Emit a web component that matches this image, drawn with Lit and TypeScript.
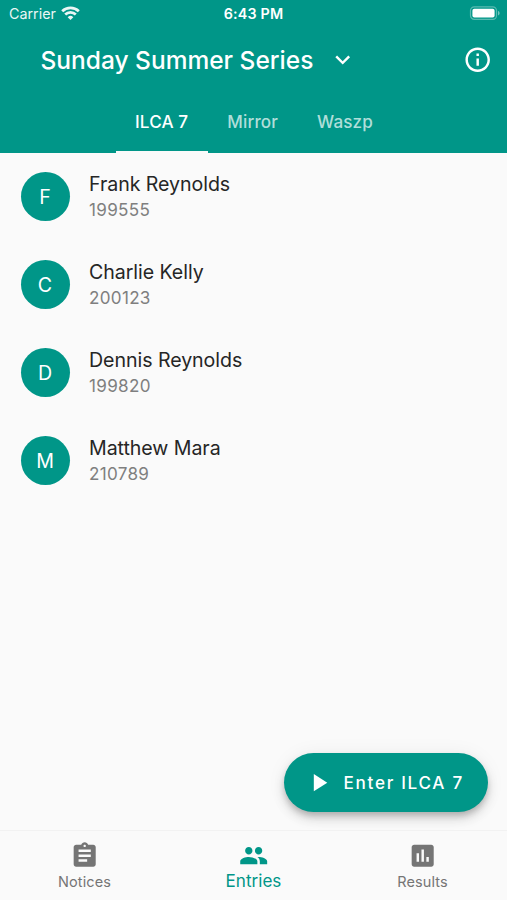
import { LitElement, html, css, svg } from "lit";
import { customElement, property, state } from "lit/decorators.js";
import { classMap } from "lit/directives/class-map.js";

const ICONS: Record<string, string> = {
  notices:
    "M19 3h-4.18C14.4 1.84 13.3 1 12 1c-1.3 0-2.4.84-2.82 2H5c-1.1 0-2 .9-2 2v14c0 1.1.9 2 2 2h14c1.1 0 2-.9 2-2V5c0-1.1-.9-2-2-2zm-7 0c.55 0 1 .45 1 1s-.45 1-1 1-1-.45-1-1 .45-1 1-1zm2 14H7v-2h7v2zm3-4H7v-2h10v2zm0-4H7V7h10v2z",
  entries:
    "M16 11c1.66 0 2.99-1.34 2.99-3S17.66 5 16 5c-1.66 0-3 1.34-3 3s1.34 3 3 3zm-8 0c1.66 0 2.99-1.34 2.99-3S9.66 5 8 5C6.34 5 5 6.34 5 8s1.34 3 3 3zm0 2c-2.33 0-7 1.17-7 3.5V19h14v-2.5c0-2.33-4.67-3.5-7-3.5zm8 0c-.29 0-.62.02-.97.05 1.16.84 1.97 1.97 1.97 3.45V19h6v-2.5c0-2.33-4.67-3.5-7-3.5z",
  results:
    "M19 3H5c-1.1 0-2 .9-2 2v14c0 1.1.9 2 2 2h14c1.1 0 2-.9 2-2V5c0-1.1-.9-2-2-2zM9 17H7v-7h2v7zm4 0h-2V7h2v10zm4 0h-2v-4h2v4z",
  info:
    "M11 7h2v2h-2zm0 4h2v6h-2zm1-9C6.480 2 2 6.480 2 12s4.480 10 10 10 10-4.480 10-10S17.520 2 12 2zm0 18c-4.410 0-8-3.590-8-8s3.590-8 8-8 8 3.590 8 8-3.590 8-8 8z",
  chevron: "M7.41 8.59 12 13.17l4.59-4.58L18 10l-6 6-6-6z",
  play: "M8 5v14l11-7z",
};

@customElement("md-icon")
class MdIcon extends LitElement {
  @property() name = "";
  static styles = css`
    :host { display: block; width: 29.4px; height: 29.4px; flex: none; }
    svg { display: block; width: 100%; height: 100%; fill: currentColor; }
  `;
  render() {
    return html`<svg viewBox="0 0 24 24">${svg`<path d=${ICONS[this.name]}></path>`}</svg>`;
  }
}

@customElement("entry-tile")
class EntryTile extends LitElement {
  @property() name = "";
  @property() sail = "";
  static styles = css`
    :host { display: flex; align-items: center; height: 88px; padding: 0 20.5px; box-sizing: border-box; }
    .avatar {
      width: 49px; height: 49px; border-radius: 50%; background: #009688; color: #fff;
      display: flex; align-items: center; justify-content: center; font-size: 19.6px;
    }
    .text { margin-left: 19.5px; }
    .name { font-size: 19.6px; line-height: 25px; color: #262626; letter-spacing: -0.06px; }
    .sail { font-size: 17.1px; line-height: 25px; color: #7f7f7f; letter-spacing: 0.3px; }
  `;
  render() {
    return html`
      <div class="avatar">${this.name[0]}</div>
      <div class="text">
        <div class="name">${this.name}</div>
        <div class="sail">${this.sail}</div>
      </div>
    `;
  }
}

@customElement("app-root")
class AppRoot extends LitElement {
  @state() private tab = "ILCA 7";
  @state() private section = "entries";

  private tabs = ["ILCA 7", "Mirror", "Waszp"];
  private entries = [
    { name: "Frank Reynolds", sail: "199555" },
    { name: "Charlie Kelly", sail: "200123" },
    { name: "Dennis Reynolds", sail: "199820" },
    { name: "Matthew Mara", sail: "210789" },
  ];
  private sections = [
    { id: "notices", label: "Notices" },
    { id: "entries", label: "Entries" },
    { id: "results", label: "Results" },
  ];

  static styles = css`
    :host {
      display: flex; flex-direction: column; position: relative; height: 900px;
      background: #fafafa; font-family: Inter, "Liberation Sans", sans-serif; overflow: hidden;
    }
    header { background: #009688; color: #fff; height: 152.5px; flex: none; display: flex; flex-direction: column; }
    .status {
      height: 25px; display: grid; grid-template-columns: 1fr auto 1fr; align-items: center;
      padding: 2px 7px 0 9px; box-sizing: border-box; font-size: 14.3px; flex: none;
    }
    .carrier { display: flex; align-items: center; gap: 5.5px; opacity: 0.92; }
    .carrier svg { width: 19px; height: 14px; margin-top: -2px; }
    .time { font-weight: 600; letter-spacing: 0.2px; margin-left: -2px; }
    .battery { justify-self: end; width: 31px; height: 14px; margin-top: -1px; }
    .bar { height: 69px; display: flex; align-items: center; padding: 0 15px 0 40.5px; flex: none; }
    .title { font-size: 24.5px; font-weight: 500; white-space: nowrap; }
    .bar .chevron { margin-left: 15px; }
    .bar .info { margin-left: auto; }
    .tabs { flex: 1; display: flex; justify-content: center; padding-left: 1px; }
    .tab {
      padding: 0 19.6px; font-size: 17.1px; font-weight: 500; line-height: 55px; color: rgba(255, 255, 255, 0.7);
      letter-spacing: 0.1px; border-bottom: 2.4px solid transparent; box-sizing: border-box;
    }
    .tab.active { color: #fff; border-color: #fafafa; }
    main { flex: 1; }
    .fab {
      position: absolute; right: 19.2px; bottom: 88.2px; width: 203.4px; height: 58.6px; border-radius: 30px;
      background: #009688; color: #fff; display: flex; align-items: center; box-sizing: border-box;
      padding-left: 19.2px; gap: 10.6px; font-size: 17.1px; font-weight: 500; white-space: nowrap;
      box-shadow: 0 4px 6px -1px rgba(0, 0, 0, 0.2), 0 7px 12px rgba(0, 0, 0, 0.13), 0 1px 20px rgba(0, 0, 0, 0.06);
    }
    .fab span { letter-spacing: 1.7px; }
    nav { height: 70px; flex: none; display: flex; border-top: 1px solid #f2f2f2; box-sizing: border-box; }
    .item { flex: 1; display: flex; flex-direction: column; align-items: center; padding-top: 10px; color: #757575; }
    .label { font-size: 14.5px; line-height: 23px; letter-spacing: 0.1px; }
    .item.active { color: #009688; }
    .item.active .label { font-size: 17.1px; line-height: 22px; letter-spacing: 0; }
  `;

  render() {
    return html`
      <header>
        <div class="status">
          <div class="carrier">
            <span>Carrier</span>
            <svg viewBox="0 0 19 14" fill="none" stroke="#fff" stroke-width="2.8">
              <path d="M1.2 5.2a12 12 0 0 1 16.6 0"></path>
              <path d="M4.2 8.5a7.7 7.7 0 0 1 10.6 0"></path>
              <path d="M9.5 14 6.7 11.2a4 4 0 0 1 5.6 0z" fill="#fff" stroke="none"></path>
            </svg>
          </div>
          <div class="time">6:43 PM</div>
          <svg class="battery" viewBox="0 0 31 14">
            <rect x="1.5" y="0.8" width="26" height="12.6" rx="3.8" fill="none" stroke="#fff" stroke-opacity=".35" stroke-width="1.2"></rect>
            <rect x="3.4" y="2.7" width="22.2" height="8.8" rx="2" fill="#fff"></rect>
            <path d="M29 5v4.4c1-.4 1.6-1.2 1.6-2.2S30 5.4 29 5z" fill="#fff" fill-opacity=".45"></path>
          </svg>
        </div>
        <div class="bar">
          <div class="title">Sunday Summer Series</div>
          <md-icon class="chevron" name="chevron"></md-icon>
          <md-icon class="info" name="info"></md-icon>
        </div>
        <div class="tabs">
          ${this.tabs.map(
            (t) => html`<div class=${classMap({ tab: true, active: t === this.tab })} @click=${() => (this.tab = t)}>${t}</div>`
          )}
        </div>
      </header>
      <main>${this.entries.map((e) => html`<entry-tile name=${e.name} sail=${e.sail}></entry-tile>`)}</main>
      <div class="fab"><md-icon name="play"></md-icon><span>Enter ${this.tab}</span></div>
      <nav>
        ${this.sections.map(
          (s) => html`
            <div class=${classMap({ item: true, active: s.id === this.section })} @click=${() => (this.section = s.id)}>
              <md-icon name=${s.id}></md-icon>
              <div class="label">${s.label}</div>
            </div>
          `
        )}
      </nav>
    `;
  }
}
